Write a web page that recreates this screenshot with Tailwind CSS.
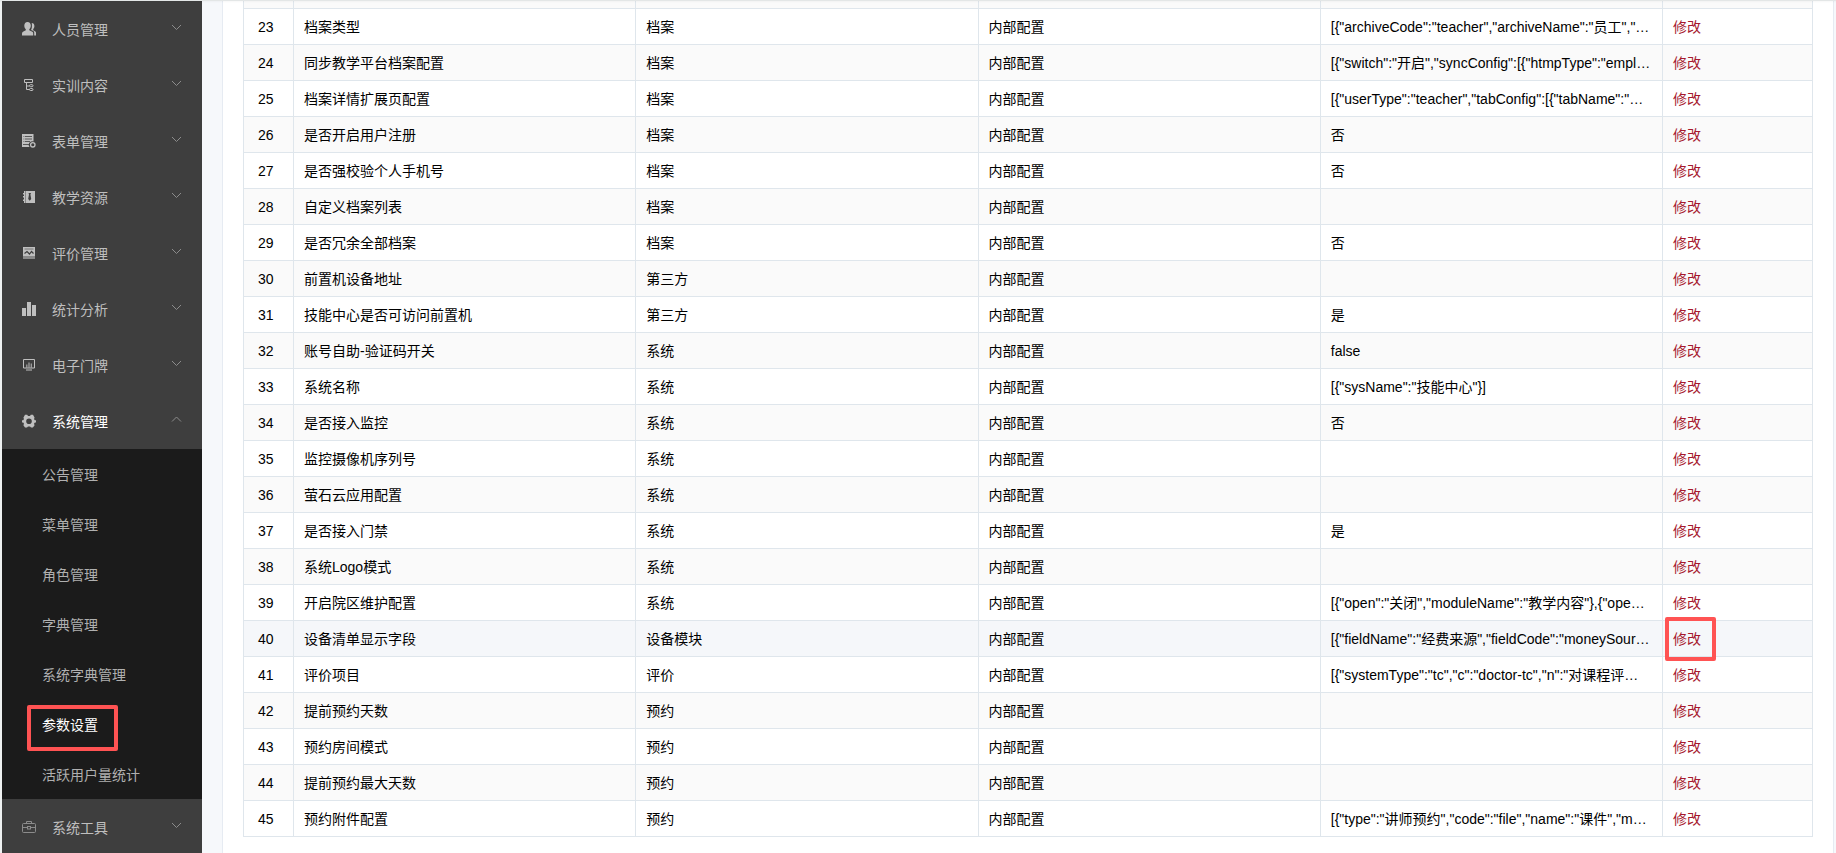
<!DOCTYPE html>
<html lang="zh-CN">
<head>
    <meta charset="UTF-8">
    <meta name="viewport" content="width=device-width, initial-scale=1.0">
    <title>参数设置</title>
    <script src="https://cdn.jsdelivr.net/npm/@tailwindcss/browser@4"></script>
</head>
<body class="h-screen overflow-hidden bg-[#eef1f1] font-['Liberation_Sans','Noto_Sans_CJK_SC',sans-serif] text-sm text-black">
    <div class="flex h-full pt-px pl-0.5">
        <!-- sidebar -->
        <nav class="w-50 shrink-0 overflow-hidden bg-[#3e3e3e] text-[#bfbfbf]">
            <ul id="menu"></ul>
        </nav>

        <!-- content -->
        <main class="min-w-0 flex-1 overflow-hidden bg-[#f6f8fb] pr-0.5 pl-5">
            <div class="h-full border-x border-[#e6ebf2] bg-white px-5">
                <table class="w-full table-fixed border-separate border-spacing-0 border-l border-[#dfe6ec]">
                    <colgroup>
                        <col class="w-[50px]">
                        <col>
                        <col>
                        <col>
                        <col>
                        <col class="w-[150px]">
                    </colgroup>
                    <tbody id="params"></tbody>
                </table>
            </div>
        </main>
    </div>
    <div class="fixed inset-x-0 top-0 h-[3px] bg-linear-to-b from-black/5 to-transparent"></div>

    <script>
        const icons = {
            user: '<path fill="currentColor" d="M5.500 0C7.600 0 8.800 1.500 8.800 3.600C8.800 5.200 8.200 6.500 7.300 7.300V8.300L10.300 9.700C11 10.100 11.200 10.600 11.200 11.400V13.500H0V11.400C0 10.600.3 10.100 1 9.700L3.800 8.300V7.300C2.900 6.500 2.300 5.200 2.300 3.600C2.300 1.500 3.500 0 5.500 0Z"/><path fill="currentColor" d="M9.700 1C11.400 1 12.400 2.300 12.400 4C12.400 5.400 11.900 6.400 11.200 7.100V8.200L13.300 9.400C13.800 9.700 14 10.100 14 10.800V13.500H12.200V10.900C12.200 9.900 11.700 9.200 10.800 8.800L9 7.900C9.700 6.900 10 5.200 9.900 3.600C9.900 2.600 10 1.700 9.700 1Z"/>',
            tree: '<g fill="none" stroke="currentColor"><path d="M2.500 1.500h8v3h-8zM4.500 4.500v7h3M4.500 8h3"/><rect x="7.500" y="6.700" width="3.500" height="2" rx="1"/><rect x="7.500" y="10.500" width="3.500" height="2" rx="1"/></g>',
            form: '<path fill="currentColor" d="M0 0h11.500v7.500a3.500 3.500 0 0 0-4 5.500H0z"/><path stroke="#3e3e3e" stroke-width=".8" d="M3 2.500h7M3 5h7M3 7.500h5M1 10.500h6M1.500 2.500h.8M1.500 5h.8M1.500 7.500h.8"/><circle cx="10.800" cy="10.800" r="2.200" fill="none" stroke="currentColor" stroke-width="1.300"/>',
            book: '<path fill="currentColor" d="M2 1h11v12H2zM1 3h1v1.500H1zM1 6h1v1.500H1zM1 9.500h1V11H1z"/><path fill="#3e3e3e" d="M6.500 3h2.500l-.6 1.500.8 4.500-1.500 1.800L6.200 9l.8-4.500z"/><path stroke="#777" stroke-width=".8" d="M3.500 1v12"/>',
            review: '<path fill="currentColor" d="M1 1h12v9H1z"/><path fill="#8a8a8a" d="M1 10h12v3H1z"/><path stroke="#666" stroke-width=".8" d="M2.500 3h9"/><path fill="none" stroke="#3e3e3e" stroke-width="1.200" d="M2.500 7.500 5 5.500 7.500 8 9.500 5.500 11.500 7.500"/>',
            chart: '<path fill="currentColor" d="M0 6h4v8H0zM5 0h4v14H5zM10 3h4v11h-4z"/>',
            screen: '<path fill="none" stroke="currentColor" d="M1.500 1.500h11v8.500h-11zM4 12h6"/><path stroke="#a0a0a0" stroke-width="1.300" d="M4.800 10V6.500M7 10V4.500M9.300 10V5.500"/>',
            gear: '<path fill="currentColor" fill-rule="evenodd" d="M3 .8h2.200L6 2h2L8.800.8H11l1.600 2.900L12 5l.8 1.200H14v2.200h-1.100L12 9.700l.6 1.500-1.700 2.300H9L8 12.400H6l-1 1.100H3L1.400 11.200 2 9.700 1.200 8.400H0V6.200h1.200L2 5l-.6-1.300zM7 4.400a2.800 2.800 0 1 0 0 5.600a2.800 2.800 0 1 0 0-5.600z"/>',
            tool: '<g fill="none" stroke="#8c8c8c"><rect x=".5" y="3.500" width="13" height="9" rx="1"/><path d="M4.500 3.500v-2h5v2M.5 7.500h5M8.500 7.500h5"/><rect x="5.500" y="6.500" width="3" height="2.500"/></g>'
        };

        const menus = [
            { icon: "user", name: "人员管理" },
            { icon: "tree", name: "实训内容" },
            { icon: "form", name: "表单管理" },
            { icon: "book", name: "教学资源" },
            { icon: "review", name: "评价管理" },
            { icon: "chart", name: "统计分析" },
            { icon: "screen", name: "电子门牌" },
            { icon: "gear", name: "系统管理", children: ["公告管理", "菜单管理", "角色管理", "字典管理", "系统字典管理", "参数设置", "活跃用户量统计"] },
            { icon: "tool", name: "系统工具" }
        ];
        const activeMenu = "参数设置";

        // [name, module, value]
        const params = [
            ["", "", ""],
            ["档案类型", "档案", '[{"archiveCode":"teacher","archiveName":"员工","…'],
            ["同步教学平台档案配置", "档案", '[{"switch":"开启","syncConfig":[{"htmpType":"empl…'],
            ["档案详情扩展页配置", "档案", '[{"userType":"teacher","tabConfig":[{"tabName":"…'],
            ["是否开启用户注册", "档案", "否"],
            ["是否强校验个人手机号", "档案", "否"],
            ["自定义档案列表", "档案", ""],
            ["是否冗余全部档案", "档案", "否"],
            ["前置机设备地址", "第三方", ""],
            ["技能中心是否可访问前置机", "第三方", "是"],
            ["账号自助-验证码开关", "系统", "false"],
            ["系统名称", "系统", '[{"sysName":"技能中心"}]'],
            ["是否接入监控", "系统", "否"],
            ["监控摄像机序列号", "系统", ""],
            ["萤石云应用配置", "系统", ""],
            ["是否接入门禁", "系统", "是"],
            ["系统Logo模式", "系统", ""],
            ["开启院区维护配置", "系统", '[{"open":"关闭","moduleName":"教学内容"},{"ope…'],
            ["设备清单显示字段", "设备模块", '[{"fieldName":"经费来源","fieldCode":"moneySour…'],
            ["评价项目", "评价", '[{"systemType":"tc","c":"doctor-tc","n":"对课程评…'],
            ["提前预约天数", "预约", ""],
            ["预约房间模式", "预约", ""],
            ["提前预约最大天数", "预约", ""],
            ["预约附件配置", "预约", '[{"type":"讲师预约","code":"file","name":"课件","m…']
        ];
        const firstNo = 22;
        const hoverNo = 40;

        function renderMenu(menu) {
            const open = !!menu.children;
            const arrow = open ? "M1 5.500 5.500 1 10 5.500" : "M1 1 5.500 5.500 10 1";
            const children = (menu.children || []).map(name => `
                <li class="h-[50px]">
                    <a href="#" class="relative flex h-full items-center pt-0.5 pl-10 ${name === activeMenu ? "text-white" : "text-[#b0b0b0]"}">${name}
                        ${name === activeMenu ? '<span class="absolute top-1.5 left-[25px] h-[46px] w-[91px] rounded-xs border-4 border-[#ff5353]"></span>' : ""}
                    </a>
                </li>`).join("");
            return `
                <li>
                    <button type="button" aria-expanded="${open}" class="flex h-14 w-full items-center pr-5 pl-5 text-left">
                        <svg class="mr-4 size-3.5" viewBox="0 0 14 14">${icons[menu.icon]}</svg>
                        <span class="flex-1 pt-0.5 ${open ? "text-white" : ""}">${menu.name}</span>
                        <svg class="mb-1 h-[7px] w-[11px]" viewBox="0 0 11 7" fill="none" stroke="#8c8c8c"><path d="${arrow}"/></svg>
                    </button>
                    ${open ? `<ul class="bg-[#1b1b1b]">${children}</ul>` : ""}
                </li>`;
        }

        function renderParam([name, module, value], index) {
            const no = firstNo + index;
            const bg = no === hoverNo ? "bg-[#f5f7fa]" : no % 2 === 0 ? "bg-[#fafafa]" : "bg-white";
            const cell = "truncate border-r border-b border-[#dfe6ec] px-2.5";
            // the first row is scrolled under the top bar, only its lower edge shows
            if (!name) {
                return `<tr class="h-2 ${bg}">${`<td class="border-r border-b border-[#dfe6ec]"></td>`.repeat(6)}</tr>`;
            }
            return `
                <tr class="h-9 ${bg}">
                    <td class="border-r border-b border-[#dfe6ec] pl-3.5">${no}</td>
                    <td class="${cell}">${name}</td>
                    <td class="${cell}">${module}</td>
                    <td class="${cell}">内部配置</td>
                    <td class="${cell}">${value}</td>
                    <td class="relative border-r border-b border-[#dfe6ec] px-2.5">
                        <button type="button" class="text-[#a6192e]">修改</button>
                        ${no === hoverNo ? '<span class="absolute -top-1 left-0.5 h-11 w-[51px] rounded-xs border-4 border-[#ff5353]"></span>' : ""}
                    </td>
                </tr>`;
        }

        document.getElementById("menu").innerHTML = menus.map(renderMenu).join("");
        document.getElementById("params").innerHTML = params.map(renderParam).join("");
    </script>
</body>
</html>
